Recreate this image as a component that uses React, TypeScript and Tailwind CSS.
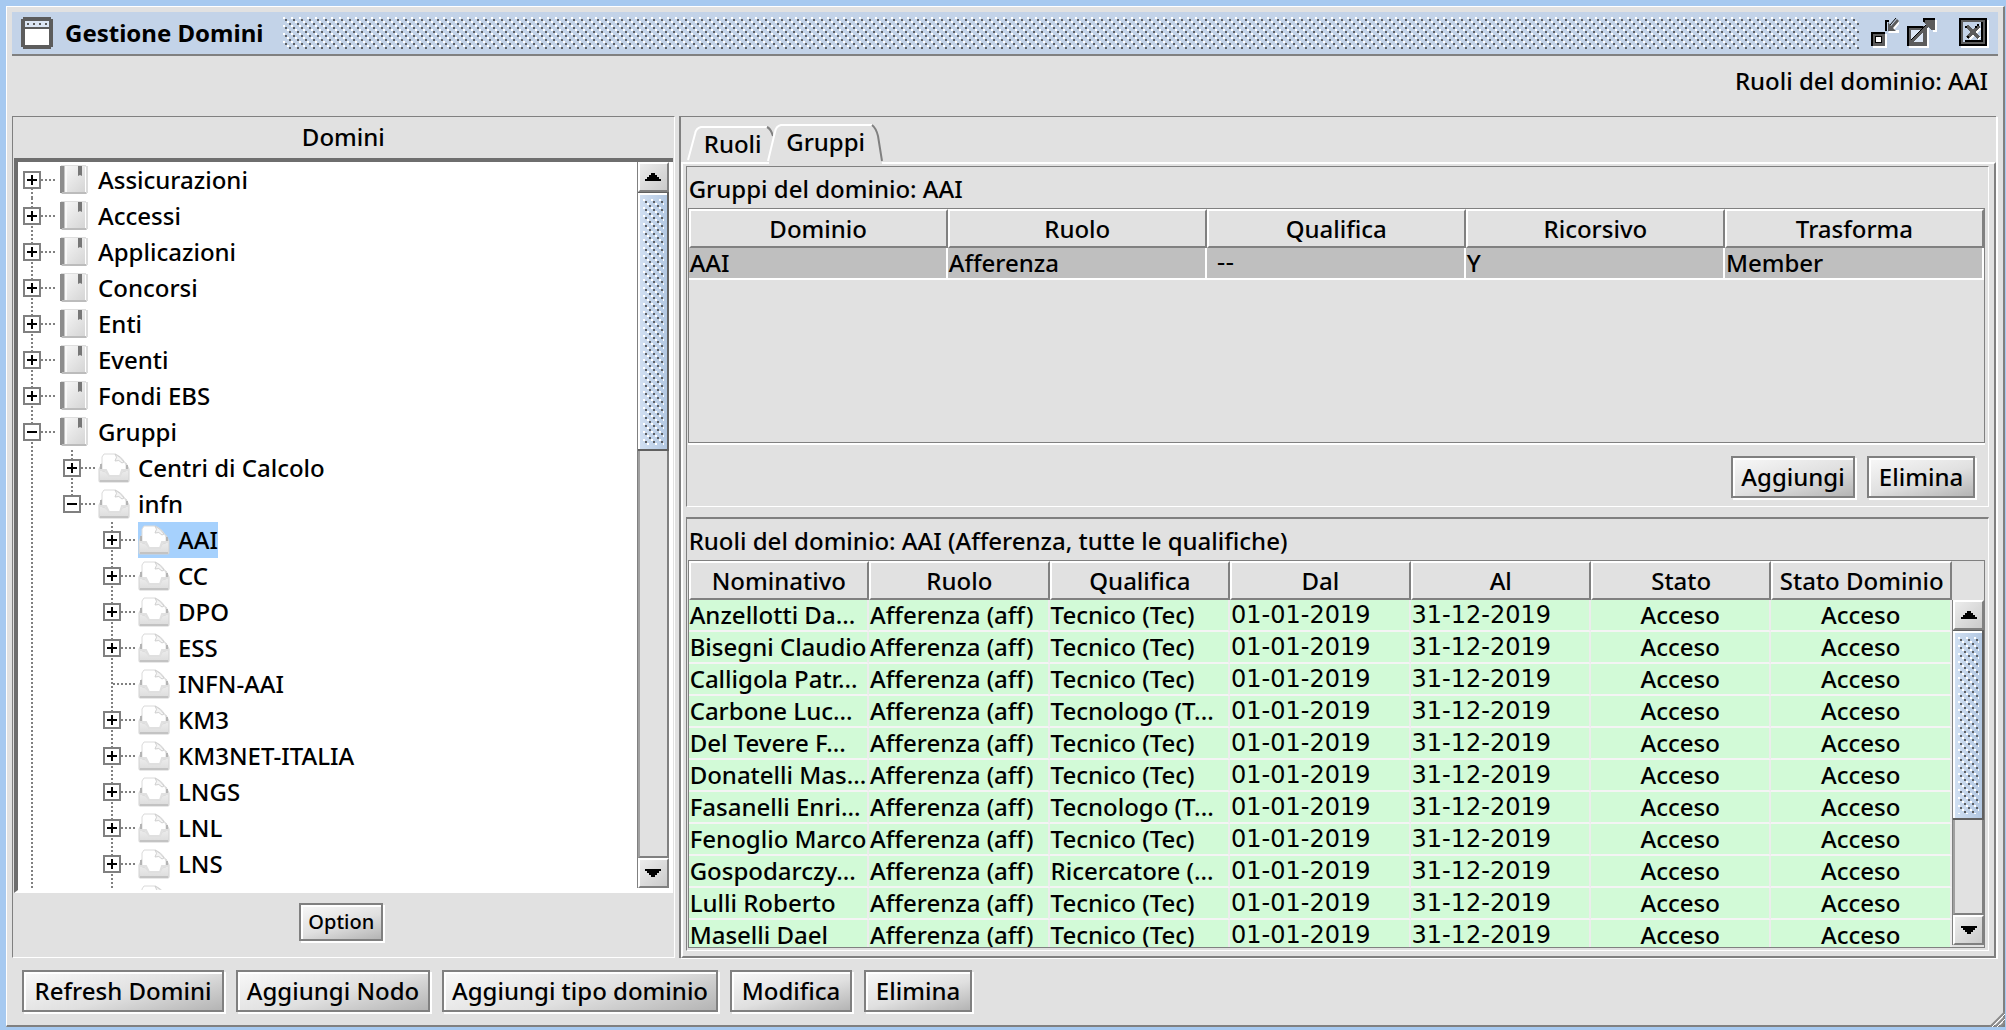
import { useId, type ReactNode } from "react";
import { clsx } from "clsx";

type NodeKind = "book" | "tray";
type Guide = "none" | "first" | "middle" | "last";

interface TreeNode {
  label: string;
  level: number;
  kind: NodeKind;
  toggle?: "plus" | "minus";
  guides: Guide[];
  selected?: boolean;
}

const leaf = (label: string, toggle?: "plus", selected = false): TreeNode => ({
  label,
  level: 2,
  kind: "tray",
  toggle,
  guides: ["middle", "none", "middle"],
  selected,
});

const root = (label: string, guide: Guide = "middle", toggle: "plus" | "minus" = "plus"): TreeNode => ({
  label,
  level: 0,
  kind: "book",
  toggle,
  guides: [guide],
});

const TREE: TreeNode[] = [
  root("Assicurazioni", "first"),
  root("Accessi"),
  root("Applicazioni"),
  root("Concorsi"),
  root("Enti"),
  root("Eventi"),
  root("Fondi EBS"),
  root("Gruppi", "middle", "minus"),
  { label: "Centri di Calcolo", level: 1, kind: "tray", toggle: "plus", guides: ["middle", "middle"] },
  { label: "infn", level: 1, kind: "tray", toggle: "minus", guides: ["middle", "last"] },
  leaf("AAI", "plus", true),
  leaf("CC", "plus"),
  leaf("DPO", "plus"),
  leaf("ESS", "plus"),
  leaf("INFN-AAI"),
  leaf("KM3", "plus"),
  leaf("KM3NET-ITALIA", "plus"),
  leaf("LNGS", "plus"),
  leaf("LNL", "plus"),
  leaf("LNS", "plus"),
  leaf(""),
];

const ROLES = [
  ["Anzellotti Da...", "Tecnico (Tec)"],
  ["Bisegni Claudio", "Tecnico (Tec)"],
  ["Calligola Patr...", "Tecnico (Tec)"],
  ["Carbone Luc...", "Tecnologo (T..."],
  ["Del Tevere F...", "Tecnico (Tec)"],
  ["Donatelli Mas...", "Tecnico (Tec)"],
  ["Fasanelli Enri...", "Tecnologo (T..."],
  ["Fenoglio Marco", "Tecnico (Tec)"],
  ["Gospodarczy...", "Ricercatore (..."],
  ["Lulli Roberto", "Tecnico (Tec)"],
  ["Maselli Dael", "Tecnico (Tec)"],
];

function Bumps({ className }: { className?: string }) {
  const id = useId();
  return (
    <svg className={className} width="100%" height="100%" shapeRendering="crispEdges" aria-hidden="true">
      <defs>
        <pattern id={id} width="8" height="8" patternUnits="userSpaceOnUse">
          <path d="M0 0h2v2h-2zM4 4h2v2h-2z" fill="#fff" />
          <path d="M2 2h2v2h-2zM6 6h2v2h-2z" fill="#5c5f63" />
        </pattern>
      </defs>
      <rect width="100%" height="100%" fill={`url(#${id})`} />
    </svg>
  );
}

function BookIcon() {
  return (
    <svg width="32" height="30" viewBox="0 0 32 30" aria-hidden="true">
      <defs>
        <linearGradient id="book" x1="0" y1="0" x2="1" y2="1">
          <stop offset="0" stopColor="#fafafa" />
          <stop offset="1" stopColor="#d2d2d2" />
        </linearGradient>
      </defs>
      <rect x="3" y="1" width="26" height="28" fill="url(#book)" />
      <path d="M2 1h4v27h-4z" fill="#8c8c8c" />
      <path d="M6 1h1v27h-1z" fill="#c4c4c4" />
      <path d="M7 1h2v26h-2z" fill="#f8f8f8" />
      <path d="M3 0h25v1h-25z" fill="#dedede" />
      <path d="M4 27h24v2h-24z" fill="#bcbcbc" />
      <path d="M27 2h1v25h-1z" fill="#fff" />
      <path d="M28 1h2v27h-2z" fill="#dcdcdc" />
      <path d="M20 1h4v10l-2-1-2 1z" fill="#777" />
    </svg>
  );
}

function TrayIcon() {
  return (
    <svg width="32" height="30" viewBox="0 0 32 30" aria-hidden="true">
      <defs>
        <linearGradient id="tray" x1="0" y1="0" x2="0" y2="1">
          <stop offset="0" stopColor="#f6f6f6" />
          <stop offset="1" stopColor="#dcdcdc" />
        </linearGradient>
      </defs>
      <path d="M4 10L1 16v12q0 1 1 1h28q1 0 1-1V16l-3-6z" fill="url(#tray)" stroke="#d2d2d2" />
      <path d="M4 18V4L6 1h11q8 3 11 11v6l-4 1-2 4H11l-3-4z" fill="#fff" stroke="#dadada" />
      <path d="M17 1q3 3 0 7 4-2 7 2l2-1q-3-5-9-8z" fill="#f4f4f4" stroke="#cfcfcf" />
      <path d="M3 11v5M29 12v4" stroke="#b4b4b4" strokeWidth="2" />
      <path d="M2 17h6l3 6h11l2-6h6" fill="none" stroke="#e0e0e0" strokeWidth="2" />
      <path d="M2 28h28" stroke="#c3c3c3" strokeWidth="2" />
    </svg>
  );
}

function GuideLines({ guide, branch, toggle }: { guide: Guide; branch: boolean; toggle?: "plus" | "minus" }) {
  return (
    <svg width="40" height="36" viewBox="0 0 40 36" shapeRendering="crispEdges" aria-hidden="true">
      <g stroke="#808080" strokeWidth="2" strokeDasharray="2 2">
        {guide !== "none" && (
          <path d={guide === "first" ? "M14 18V36" : guide === "last" ? "M14 0V18" : "M14 0V36"} />
        )}
        {branch && <path d="M15 18H38" />}
      </g>
      {toggle && (
        <>
          <rect x="6" y="10" width="16" height="16" fill="#fff" stroke="#808080" strokeWidth="2" />
          <path d={toggle === "plus" ? "M9 18H19M14 13V23" : "M9 18H19"} stroke="#000" strokeWidth="2" />
        </>
      )}
    </svg>
  );
}

function TreeRow({ node }: { node: TreeNode }) {
  return (
    <li className="flex h-9 items-center">
      {node.guides.map((guide, i) =>
        i === node.level && node.toggle ? (
          <button
            key={i}
            type="button"
            aria-label={node.toggle === "plus" ? `Espandi ${node.label}` : `Comprimi ${node.label}`}
          >
            <GuideLines guide={guide} branch toggle={node.toggle} />
          </button>
        ) : (
          <GuideLines key={i} guide={guide} branch={i === node.level} />
        )
      )}
      <span className={clsx("flex h-9 items-center gap-2", node.selected && "bg-[#a6d1fd]")}>
        {node.kind === "book" ? <BookIcon /> : <TrayIcon />}
        {node.label}
      </span>
    </li>
  );
}

function ArrowButton({ down }: { down?: boolean }) {
  return (
    <button
      type="button"
      aria-label={down ? "Scorri in basso" : "Scorri in alto"}
      className="flex h-[30px] flex-none items-center justify-center border-t-2 border-r-2 border-b-2 border-l-2 border-t-white border-r-[#808080] border-b-[#808080] border-l-white bg-linear-to-br from-[#ececec] to-[#cbcbcb]"
    >
      <svg width="16" height="8" viewBox="0 0 16 8" shapeRendering="crispEdges" aria-hidden="true">
        <path
          d={down ? "M0 0h16v2h-2v2h-2v2h-2v2h-4v-2h-2v-2h-2v-2h-2z" : "M0 8h16v-2h-2v-2h-2v-2h-2v-2h-4v2h-2v2h-2v2h-2z"}
        />
      </svg>
    </button>
  );
}

function ScrollBar({ thumb, className }: { thumb: number; className?: string }) {
  return (
    <div className={clsx("flex w-8 flex-none flex-col border-l border-[#808080] bg-[#e1e1e1]", className)}>
      <ArrowButton />
      <div className="min-h-0 flex-1 border-r-2 border-b-2 border-l-2 border-r-[#808080] border-b-[#808080] border-l-[#a0a0a0]">
        <div
          className="-mr-[2px] -ml-[2px] border-t border-r-2 border-b-2 border-t-[#606060] border-r-[#606060] border-b-[#606060] bg-linear-to-r from-[#d3e1f3] to-[#b3c8e2] pt-1.5 pr-[3px] pb-1 pl-[5px] shadow-[inset_2px_2px_0_#fff]"
          style={{ height: `${thumb}%` }}
        >
          <Bumps className="block" />
        </div>
      </div>
      <ArrowButton down />
    </div>
  );
}

function MetalButton({ children, className }: { children: ReactNode; className?: string }) {
  return (
    <button
      type="button"
      className={clsx(
        "flex-none border-2 border-[#808080] bg-linear-165 from-[#f6f6f6] from-5% via-[#e0e0e0] via-55% to-[#b4b4b4] text-center whitespace-nowrap shadow-[inset_2px_2px_0_#fff,2px_2px_0_#fff]",
        className
      )}
    >
      {children}
    </button>
  );
}

function Th({ children }: { children: ReactNode }) {
  return (
    <th className="h-[39px] border-t-2 border-r-2 border-b-2 border-l-2 border-t-white border-r-[#808080] border-b-[#808080] border-l-white p-0 text-center font-medium whitespace-nowrap">
      {children}
    </th>
  );
}

function TitleBar() {
  return (
    <header className="flex h-11 flex-none items-center border-b-2 border-[#808080] bg-[#c3d3e8] pr-[9px] pl-[9px]">
      <svg width="32" height="32" viewBox="0 0 32 32" shapeRendering="crispEdges" aria-hidden="true">
        <path d="M2 0h28v2h2v28h-2v2h-28v-2h-2v-28h2z" fill="#5c5c5c" />
        <path d="M4 4h24v6h-24z" fill="#dce6f4" />
        <path d="M6 6h2v2h-2zM12 6h2v2h-2zM18 6h2v2h-2zM24 6h2v2h-2z" fill="#5c5c5c" />
        <path d="M4 12h24v16h-24z" fill="#fff" />
      </svg>
      <h1 className="ml-3 w-52 text-2xl font-bold">Gestione Domini</h1>
      <div className="ml-2.5 h-8 flex-1">
        <Bumps className="block" />
      </div>
      <div className="ml-3 flex items-center">
        <button type="button" aria-label="Riduci">
          <svg width="28" height="30" viewBox="0 0 28 30" aria-hidden="true">
            <g shapeRendering="crispEdges">
              <path d="M2 16h14v14H2z" fill="#fff" />
              <path d="M0 14h14v14H0z" fill="#5c5c5c" />
              <path d="M0 14h14v2H2v12H0z" />
              <path d="M4 18h7v7H4z" />
              <path d="M5 19h5v5H5z" fill="#fff" />
            </g>
            <path d="M17 15h11v-3h-5l5-6V3l-9 9z" fill="#fff" />
            <path d="M17 4v9h8l-3-3 6-7-2-2-6 7z" fill="#5c5c5c" />
            <path d="M14 2h4v2h-2v9h-2z" shapeRendering="crispEdges" />
            <path d="M19 7L25 0" stroke="#000" />
          </svg>
        </button>
        <button type="button" aria-label="Ingrandisci" className="ml-2">
          <svg width="30" height="30" viewBox="0 0 30 30" shapeRendering="crispEdges" aria-hidden="true">
            <path d="M2 10h20v20H2zM18 2h12v12h-4V6h-8z" fill="#fff" />
            <path d="M0 8h20v20H0z" fill="#5c5c5c" />
            <path d="M0 8h16v2H2v18H0z" />
            <path d="M4 12h12v12H4z" fill="#dce6f4" />
            <path d="M4 24L24 4" stroke="#5c5c5c" strokeWidth="4" />
            <path d="M4 22L22 4" stroke="#000" strokeWidth="1" />
            <path d="M16 0h12v12h-4l-8-8z" fill="#5c5c5c" />
            <path d="M16 0h12v2H18v2h-2z" />
          </svg>
        </button>
        <button type="button" aria-label="Chiudi" className="ml-[22px]">
          <svg width="30" height="30" viewBox="0 0 30 30" shapeRendering="crispEdges" aria-hidden="true">
            <path d="M2 2h28v28H2z" fill="#fff" />
            <path d="M0 0h28v28H0z" />
            <path d="M2 2h24v24H2z" fill="#5c5c5c" />
            <path d="M4 4h20v20H4z" fill="#c3d3e8" />
            <path d="M24 4v20H6v-2h16V4z" />
            <path d="M10 10L21 21M21 10L10 21" stroke="#fff" strokeWidth="4" />
            <path d="M8 8L20 20M20 8L8 20" stroke="#5c5c5c" strokeWidth="4" />
            <path d="M6 8h2v2h-2zM18 6h2v2h-2zM16 8h2v2h-2zM8 18h2v2h-2z" />
          </svg>
        </button>
      </div>
    </header>
  );
}

function DomainTree() {
  return (
    <section className="flex w-[33.4%] flex-none flex-col border border-t-[#808080] border-r-white border-b-white border-l-[#808080]">
      <h2 className="flex h-[41px] flex-none items-center justify-center pb-0.5">Domini</h2>
      <div className="mr-px ml-px flex min-h-0 flex-1 border-t-4 border-b-[3px] border-l-4 border-t-[#6e6e6e] border-b-white border-l-[#6e6e6e] bg-white pr-1">
        <ul className="min-w-0 flex-1 overflow-hidden">
          {TREE.map((node, i) => (
            <TreeRow key={i} node={node} />
          ))}
        </ul>
        <ScrollBar thumb={39} className="mb-0.5" />
      </div>
      <div className="flex h-16 flex-none justify-center pt-[10px] pr-1">
        <MetalButton className="h-[38px] w-[84px] text-xl">Option</MetalButton>
      </div>
    </section>
  );
}

function Tabs() {
  return (
    <div role="tablist" className="flex h-[45px] flex-none items-end pl-1.5">
      <button type="button" role="tab" aria-selected="false" className="relative h-9 w-[86px] pl-1.5">
        <svg className="absolute inset-0" width="86" height="36" viewBox="0 0 86 36" fill="none" strokeWidth="2" aria-hidden="true">
          <path d="M1 34L8 8Q9 2 14 1H80" stroke="#fff" />
          <path d="M80 1Q84 3 86 10" stroke="#808080" />
        </svg>
        Ruoli
      </button>
      <button type="button" role="tab" aria-selected="true" className="relative -mb-[2px] -ml-1.5 h-10 w-[118px] pb-1">
        <svg className="absolute inset-0" width="118" height="40" viewBox="0 0 118 40" fill="none" strokeWidth="2" aria-hidden="true">
          <path d="M2 40V36L8 8Q9 2 14 1H105Q112 8 115 40z" fill="#e1e1e1" />
          <path d="M1 37L8 8Q9 2 14 1H105" stroke="#fff" />
          <path d="M105 1Q109 4 111 12L115 37" stroke="#808080" />
        </svg>
        <span className="relative">Gruppi</span>
      </button>
    </div>
  );
}

function GroupsPanel() {
  return (
    <section className="flex-none border border-t-[#808080] border-r-white border-b-white border-l-[#808080] pr-[3px] pl-px">
      <h2 className="flex h-[41px] items-center pt-0.5 pl-px">Gruppi del dominio: AAI</h2>
      <div className="h-[235px] border border-[#808080] shadow-[0_2px_0_#fff]">
        <table className="w-full table-fixed border-separate border-spacing-0">
          <thead>
            <tr>
              <Th>Dominio</Th>
              <Th>Ruolo</Th>
              <Th>Qualifica</Th>
              <Th>Ricorsivo</Th>
              <Th>Trasforma</Th>
            </tr>
          </thead>
          <tbody>
            <tr className="bg-[#bfbfbf]">
              {["AAI", "Afferenza", "--", "Y", "Member"].map((value) => (
                <td
                  key={value}
                  className={clsx(
                    "h-8 border-r-2 border-b-2 border-white py-0 leading-7",
                    value === "--" ? "pl-2.5 font-['DejaVu_Sans',sans-serif]" : "pl-px"
                  )}
                >
                  {value}
                </td>
              ))}
            </tr>
          </tbody>
        </table>
      </div>
      <div className="flex h-[63px] justify-end gap-3 pt-[13px] pr-2.5">
        <MetalButton className="h-[42px] w-[124px]">Aggiungi</MetalButton>
        <MetalButton className="h-[42px] w-[108px]">Elimina</MetalButton>
      </div>
    </section>
  );
}

function RolesPanel() {
  const cell = "h-8 border-r-2 border-b-2 border-r-[#ececec] border-b-[#f4f4f4] py-0 leading-7 whitespace-nowrap";
  const date = "pl-px font-['DejaVu_Sans',sans-serif]";
  return (
    <section className="mt-2.5 flex min-h-0 flex-1 flex-col border border-t-2 border-t-[#808080] border-r-white border-b-white border-l-[#808080] pr-[3px] pb-0.5 pl-px">
      <h2 className="flex h-[41px] flex-none items-center pt-0.5 pl-px">
        Ruoli del dominio: AAI (Afferenza, tutte le qualifiche)
      </h2>
      <div className="flex min-h-0 flex-1 border border-[#808080]">
        <div className="min-w-0 flex-1 overflow-hidden">
          <table className="w-full table-fixed border-separate border-spacing-0">
            <thead>
              <tr>
                <Th>Nominativo</Th>
                <Th>Ruolo</Th>
                <Th>Qualifica</Th>
                <Th>Dal</Th>
                <Th>Al</Th>
                <Th>Stato</Th>
                <Th>Stato Dominio</Th>
              </tr>
            </thead>
            <tbody>
              {ROLES.map(([name, qualifica]) => (
                <tr key={name} className="bg-[#d2fad7]">
                  <td className={clsx(cell, "pl-px")}>{name}</td>
                  <td className={clsx(cell, "pl-px")}>Afferenza (aff)</td>
                  <td className={clsx(cell, "pl-px")}>{qualifica}</td>
                  <td className={clsx(cell, date)}>01-01-2019</td>
                  <td className={clsx(cell, date)}>31-12-2019</td>
                  <td className={clsx(cell, "text-center")}>Acceso</td>
                  <td className={clsx(cell, "text-center")}>Acceso</td>
                </tr>
              ))}
            </tbody>
          </table>
        </div>
        <ScrollBar thumb={67} className="mt-[39px] mb-0.5" />
      </div>
    </section>
  );
}

export default function App() {
  return (
    <div className="h-screen overflow-hidden bg-[#a6c9f0] pt-1.5 pr-px pb-[3px] pl-1.5 font-['Noto_Sans',sans-serif] text-2xl leading-none font-medium text-black">
      <div className="relative flex h-full flex-col border-t border-r-2 border-b-2 border-l border-t-white border-r-[#808080] border-b-[#808080] border-l-white bg-[#e1e1e1] pt-[5px] pr-[5px] pl-[5px]">
        <TitleBar />
        <p className="flex h-[60px] flex-none items-center justify-end pr-2.5 pb-2.5">Ruoli del dominio: AAI</p>
        <main className="flex min-h-0 flex-1 gap-1 pr-0.5">
          <DomainTree />
          <section className="flex min-w-0 flex-1 flex-col border-t border-l-2 border-[#808080] shadow-[2px_1px_0_#fff]">
            <Tabs />
            <div className="flex min-h-0 flex-1 flex-col border-t-2 border-r-2 border-b-2 border-l-2 border-t-white border-r-[#808080] border-b-[#808080] border-l-white pt-0.5 pr-[5px] pb-[5px] pl-[3px]">
              <GroupsPanel />
              <RolesPanel />
            </div>
          </section>
        </main>
        <footer className="flex h-[67px] flex-none gap-3 pt-3 pl-2.5">
          <MetalButton className="h-[42px] w-[202px]">Refresh Domini</MetalButton>
          <MetalButton className="h-[42px] w-[194px]">Aggiungi Nodo</MetalButton>
          <MetalButton className="h-[42px] w-[276px]">Aggiungi tipo dominio</MetalButton>
          <MetalButton className="h-[42px] w-[122px]">Modifica</MetalButton>
          <MetalButton className="h-[42px] w-[108px]">Elimina</MetalButton>
        </footer>
        <svg className="absolute -right-0.5 -bottom-0.5" width="16" height="16" viewBox="0 0 16 16" fill="none" aria-hidden="true">
          <path d="M1 16L16 1M6 16L16 6M11 16L16 11" stroke="#8a8a8a" strokeWidth="2" />
          <path d="M3 16L16 3M8 16L16 8" stroke="#fff" />
        </svg>
      </div>
    </div>
  );
}
